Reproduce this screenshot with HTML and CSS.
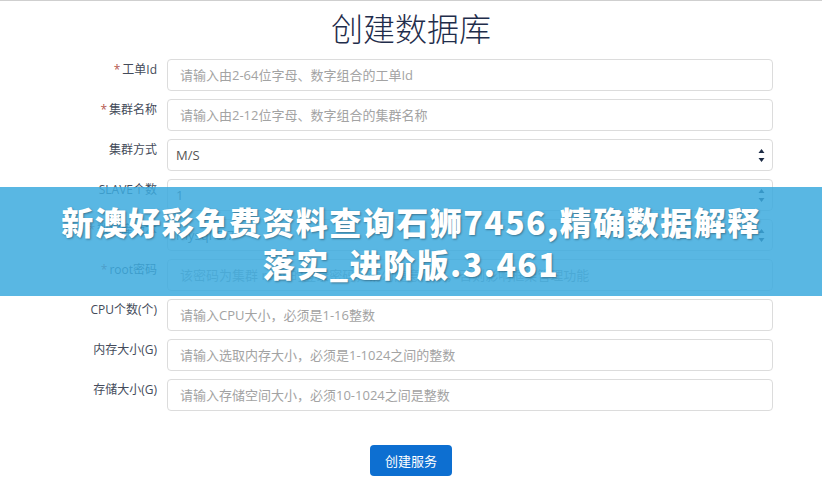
FILE: index.html
```html
<!DOCTYPE html>
<html lang="zh-CN">
<head>
<meta charset="utf-8">
<title>创建数据库</title>
<link rel="stylesheet" href="styles.css">
</head>
<body>
<div class="page">
  <h1 class="title">创建数据库</h1>
  <form class="form">
    <div class="row">
      <label class="label"><span class="req">*</span>工单Id</label>
      <input class="field" type="text" placeholder="请输入由2-64位字母、数字组合的工单Id">
    </div>
    <div class="row">
      <label class="label"><span class="req">*</span>集群名称</label>
      <input class="field" type="text" placeholder="请输入由2-12位字母、数字组合的集群名称">
    </div>
    <div class="row">
      <label class="label">集群方式</label>
      <div class="field select"><span>M/S</span>
        <svg class="arrows" width="7" height="15" viewBox="0 0 7 15"><path d="M3.5 1 L6.5 5 H0.5 Z M3.5 14 L6.5 10 H0.5 Z" fill="#1c2b45"/></svg>
      </div>
    </div>
    <div class="row">
      <label class="label">SLAVE个数</label>
      <div class="field select"><span>1</span>
        <svg class="arrows" width="7" height="15" viewBox="0 0 7 15"><path d="M3.5 1 L6.5 5 H0.5 Z M3.5 14 L6.5 10 H0.5 Z" fill="#1c2b45"/></svg>
      </div>
    </div>
    <div class="row">
      <label class="label"><span class="req">*</span>数据库版本</label>
      <div class="field select"><span>mysql-5.7</span>
        <svg class="arrows" width="7" height="15" viewBox="0 0 7 15"><path d="M3.5 1 L6.5 5 H0.5 Z M3.5 14 L6.5 10 H0.5 Z" fill="#1c2b45"/></svg>
      </div>
    </div>
    <div class="row">
      <label class="label"><span class="req">*</span>root密码</label>
      <input class="field" type="password" placeholder="该密码为集群 root 的登录密码，请勿随意修改，否则影响框架管理功能">
    </div>
    <div class="row">
      <label class="label">CPU个数(个)</label>
      <input class="field" type="text" placeholder="请输入CPU大小，必须是1-16整数">
    </div>
    <div class="row">
      <label class="label">内存大小(G)</label>
      <input class="field" type="text" placeholder="请输入选取内存大小，必须是1-1024之间的整数">
    </div>
    <div class="row">
      <label class="label">存储大小(G)</label>
      <input class="field" type="text" placeholder="请输入存储空间大小，必须10-1024之间是整数">
    </div>
    <div class="actions">
      <button class="btn" type="button">创建服务</button>
    </div>
  </form>
  <div class="banner">
    <p class="banner-line">新澳好彩免费资料查询石狮7456,精确数据解释</p>
    <p class="banner-line">落实_进阶版.3.461</p>
  </div>
</div>
</body>
</html>
```

FILE: styles.css
```css
html, body {
  margin: 0;
  padding: 0;
  background: #ffffff;
}

.page {
  position: relative;
  width: 822px;
  height: 484px;
  border-top: 1px solid #cfcfcf;
  box-sizing: border-box;
  overflow: hidden;
  font-family: "Open Sans", "Noto Sans CJK SC", sans-serif;
}

.title {
  margin: 6px 0 0 0;
  height: 40px;
  line-height: 40px;
  text-align: center;
  font-family: "Noto Sans CJK SC", sans-serif;
  font-weight: 300;
  font-size: 32px;
  color: #1f2d4b;
}

.form {
  margin: 12px 49px 0 0;
  display: flex;
  flex-direction: column;
  gap: 8px;
}

.row {
  display: grid;
  grid-template-columns: 157px 1fr;
  column-gap: 10px;
  align-items: start;
}

.label {
  text-align: right;
  font-size: 12px;
  line-height: 22px;
  color: #444b5a;
  font-family: "Open Sans", "Noto Sans CJK SC", sans-serif;
}

.req {
  color: #b5574f;
  margin-right: 2px;
}

.field {
  box-sizing: border-box;
  height: 32px;
  width: 100%;
  margin: 0;
  padding: 0 12px;
  border: 1px solid #dcdcdc;
  border-radius: 4px;
  background: #fff;
  font-family: "Open Sans", "Noto Sans CJK SC", sans-serif;
  font-size: 13px;
  color: #555;
  outline: none;
}

.field::placeholder {
  color: #a3a3a3;
}

.select {
  display: flex;
  align-items: center;
  justify-content: space-between;
  padding: 0 7px 0 8px;
}

.arrows {
  display: block;
}

.actions {
  display: flex;
  justify-content: center;
  padding-left: 49px;
  margin-top: 26px;
}

.btn {
  width: 82px;
  height: 31px;
  border: none;
  border-radius: 4px;
  background: #0d6fd1;
  color: #fff;
  font-family: "Noto Sans CJK SC", sans-serif;
  font-size: 13px;
  padding: 0;
}

.banner {
  position: absolute;
  left: 0;
  right: 0;
  top: 186px;
  height: 109px;
  background: rgba(60, 170, 222, 0.85);
  display: flex;
  flex-direction: column;
  justify-content: center;
  align-items: center;
}

.banner-line {
  margin: 0;
  line-height: 42px;
  font-family: "Noto Sans CJK SC", sans-serif;
  font-weight: 900;
  font-size: 32px;
  letter-spacing: 1.5px;
  color: #ffffff;
  text-shadow: 1px 1px 2px rgba(0, 0, 0, 0.35);
  white-space: nowrap;
}
```
